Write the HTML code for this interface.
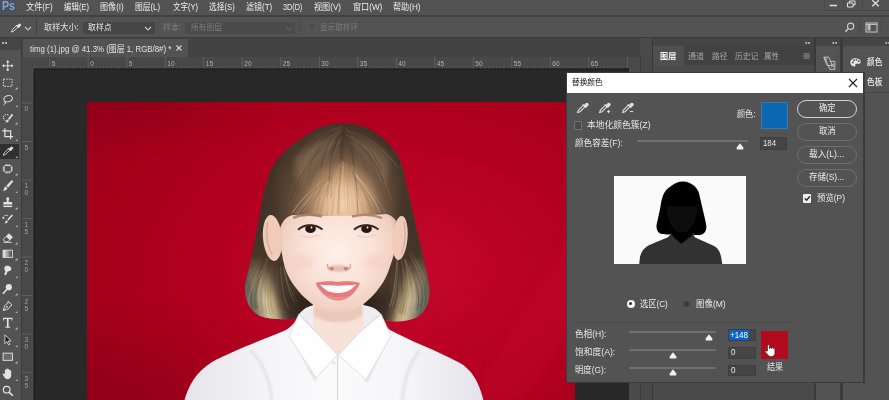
<!DOCTYPE html>
<html lang="zh-CN">
<head>
<meta charset="utf-8">
<title>Photoshop - 替换颜色</title>
<style>
html,body{margin:0;padding:0;}
body{width:889px;height:400px;overflow:hidden;position:relative;background:#535353;
  font-family:"Liberation Sans","Noto Sans CJK SC",sans-serif;font-size:9px;color:#dcdcdc;}
#wrap{position:absolute;left:0;top:0;width:889px;height:400px;overflow:hidden;filter:blur(0.3px);}
.abs{position:absolute;}
.t{position:absolute;white-space:nowrap;line-height:1;transform-origin:0 50%;}

.sep{position:absolute;background:#424242;}
.btn{position:absolute;box-sizing:border-box;border:1px solid #6e6e6e;border-radius:9px;}
.inp{position:absolute;box-sizing:border-box;background:#454545;border:1px solid #3e3e3e;}
.trk{position:absolute;height:2px;background:#707070;border-radius:1px;}

</style>
</head>
<body>
<div id="wrap">

<div class="abs" style="left:0;top:0;width:889px;height:15px;background:#535353"></div>
<div class="abs" style="left:0;top:0;width:15.500px;height:14px;background:#465266;opacity:0.55"></div>
<div class="abs" style="left:0;top:16px;width:889px;height:21px;background:#535353"></div>
<div class="abs" style="left:0;top:15.300px;width:889px;height:1.400px;background:#414141"></div>
<div class="abs" style="left:0;top:37px;width:889px;height:1px;background:#3c3c3c"></div>
<div class="abs" style="left:0;top:38px;width:640px;height:19px;background:#434343"></div><div class="abs" style="left:640px;top:38px;width:13px;height:19px;background:#4a4a4a"></div>
<div class="abs" style="left:23px;top:39px;width:165px;height:18px;background:#535353"></div>
<div class="abs" style="left:34px;top:69px;width:595px;height:331px;background:#282828"></div>
<div class="abs" style="left:629px;top:57px;width:11px;height:343px;background:#4a4a4a"></div>
<div class="abs" style="left:640px;top:57px;width:13px;height:343px;background:#484848;border-left:1px solid #3c3c3c;box-sizing:border-box"></div>
<!-- window controls -->
<div class="sep" style="left:824px;top:0;width:1px;height:10px;background:#484848"></div>
<div class="sep" style="left:843px;top:0;width:1px;height:10px;background:#484848"></div>
<div class="sep" style="left:862px;top:0;width:1px;height:10px;background:#484848"></div>
<div class="sep" style="left:824px;top:10px;width:65px;height:1px;background:#484848"></div>
<svg class="abs" style="left:824px;top:0" width="65" height="10" viewBox="0 0 65 10"><path d="M5.700 5.500h7.300" stroke="#e0e0e0" stroke-width="1.500"/><path d="M23.500 3h5.500v4h-5.500zM25.500 3v-2h5.500v4h-2" stroke="#e0e0e0" stroke-width="1" fill="none"/><path d="M48.300 0.300l6.500 6M54.800 0.300l-6.500 6" stroke="#e6e6e6" stroke-width="1.300"/></svg>
<!-- options bar -->
<svg class="abs" style="left:9.500px;top:22px" width="11.500" height="11.500" viewBox="0 0 16 16"><path d="M2 14l1.2-3.2L9 5l2 2-5.8 5.8z" fill="none" stroke="#e6e6e6" stroke-width="1.2"/><path d="M8.3 4.2l3.5 3.5M10 5.6l2.2-2.4a1.5 1.5 0 0 1 2.2 2.2L12 7.6z" fill="#e6e6e6" stroke="#e6e6e6" stroke-width="1.3"/></svg>
<svg class="abs" style="left:24.2px;top:25.7px" width="8" height="6" viewBox="0 0 8 6"><path d="M1 1l3 3 3-3" stroke="#c8c8c8" stroke-width="1.1" fill="none"/></svg>
<div class="sep" style="left:36px;top:18px;width:1px;height:17px"></div>
<div class="abs" style="left:83px;top:22px;width:72px;height:12px;background:#454545;border-radius:2px"></div>
<svg class="abs" style="left:144px;top:26px" width="8" height="6" viewBox="0 0 8 6"><path d="M1 1l3 3 3-3" stroke="#c8c8c8" stroke-width="1.1" fill="none"/></svg>
<div class="abs" style="left:185px;top:22px;width:110px;height:12px;background:#4b4b4b;border-radius:2px"></div>
<svg class="abs" style="left:285px;top:26px" width="8" height="6" viewBox="0 0 8 6"><path d="M1 1l3 3 3-3" stroke="#606060" stroke-width="1.1" fill="none"/></svg>
<div class="sep" style="left:300px;top:18px;width:1px;height:17px;background:#4a4a4a"></div>
<div class="abs" style="left:308px;top:23px;width:8px;height:8px;background:#4e4e4e;border:1px solid #5a5a5a;box-sizing:border-box"></div>
<svg class="abs" style="left:843px;top:20px" width="14" height="14" viewBox="0 0 14 14"><circle cx="7.6" cy="6.2" r="3.1" stroke="#cdcdcd" stroke-width="1.2" fill="none"/><path d="M5.400 8.500L2.400 11.700" stroke="#cdcdcd" stroke-width="1.500"/></svg><div class="sep" style="left:860px;top:18px;width:1px;height:17px;background:#4a4a4a"></div><div class="sep" style="left:881px;top:18px;width:1px;height:17px;background:#4a4a4a"></div>
<svg class="abs" style="left:865px;top:22px" width="14" height="12" viewBox="0 0 14 12"><rect x="1" y="1" width="11" height="9" stroke="#bdbdbd" stroke-width="1.1" fill="none"/><rect x="2.5" y="3" width="3" height="5.5" fill="#bdbdbd"/><path d="M1 2.5h11" stroke="#bdbdbd"/></svg>
<!-- tab close -->
<svg class="abs" style="left:175px;top:44px" width="8" height="8" viewBox="0 0 8 8"><path d="M1.5 1.5l5 5M6.5 1.5l-5 5" stroke="#d6d6d6" stroke-width="1.1"/></svg>

<svg id="photo" class="abs" style="left:87px;top:102px" width="488" height="298" viewBox="87 102 488 298">
<defs>
<radialGradient id="bgR" gradientUnits="userSpaceOnUse" cx="400" cy="270" r="330" gradientTransform="translate(400 270) scale(1.3 0.9) translate(-400 -270)">
<stop offset="0" stop-color="#c4082c"/><stop offset="0.2" stop-color="#bd0427"/><stop offset="0.45" stop-color="#b20020"/><stop offset="0.7" stop-color="#a6001b"/><stop offset="1" stop-color="#98001a"/>
</radialGradient>
<linearGradient id="hairG" gradientUnits="userSpaceOnUse" x1="0" y1="123" x2="0" y2="320">
<stop offset="0" stop-color="#4a3a2e"/><stop offset="0.12" stop-color="#5e4a3a"/><stop offset="0.3" stop-color="#66513e"/><stop offset="0.5" stop-color="#4c3b2d"/><stop offset="0.72" stop-color="#49392c"/><stop offset="0.88" stop-color="#6a5a46"/><stop offset="1" stop-color="#8a7a58"/>
</linearGradient>
<radialGradient id="bangG" gradientUnits="userSpaceOnUse" cx="343" cy="203" r="52" fx="347" fy="204">
<stop offset="0" stop-color="#f0d3b2"/><stop offset="0.45" stop-color="#dcb892"/><stop offset="0.8" stop-color="#b3916e" stop-opacity="0.9"/><stop offset="1" stop-color="#8a735a" stop-opacity="0"/>
</radialGradient>
<radialGradient id="dkG"><stop offset="0" stop-color="#6a0010" stop-opacity="0.34"/><stop offset="0.5" stop-color="#6a0010" stop-opacity="0.16"/><stop offset="1" stop-color="#6a0010" stop-opacity="0"/></radialGradient>
<radialGradient id="capG" gradientUnits="userSpaceOnUse" cx="339" cy="206" r="88" fx="344" fy="204" gradientTransform="translate(339 206) scale(0.9 1) translate(-339 -206)">
<stop offset="0" stop-color="#f2d2ae"/><stop offset="0.2" stop-color="#e4bd96"/><stop offset="0.36" stop-color="#b48c68"/><stop offset="0.5" stop-color="#785e48"/><stop offset="0.68" stop-color="#584434"/><stop offset="0.88" stop-color="#463629"/><stop offset="1" stop-color="#3a2c22"/>
</radialGradient>
<radialGradient id="faceG" gradientUnits="userSpaceOnUse" cx="338" cy="252" r="72">
<stop offset="0" stop-color="#fef0e9"/><stop offset="0.5" stop-color="#f9e2d7"/><stop offset="0.82" stop-color="#f0cfc0"/><stop offset="1" stop-color="#dfb3a0"/>
</radialGradient>
<linearGradient id="shirtG" gradientUnits="userSpaceOnUse" x1="185" y1="0" x2="485" y2="0">
<stop offset="0" stop-color="#e4e4ea"/><stop offset="0.25" stop-color="#f4f4f7"/><stop offset="0.5" stop-color="#fbfbfc"/><stop offset="0.75" stop-color="#f5f5f8"/><stop offset="1" stop-color="#e2e2e9"/>
</linearGradient>
<linearGradient id="lobeL" gradientUnits="userSpaceOnUse" x1="245" y1="0" x2="300" y2="0" gradientTransform="translate(0 272) skewX(14) translate(0 -272)">
<stop offset="0" stop-color="#6a6f60"/><stop offset="0.1" stop-color="#a1967a"/><stop offset="0.24" stop-color="#d2c098"/><stop offset="0.38" stop-color="#b8a27a"/><stop offset="0.5" stop-color="#645240"/><stop offset="0.62" stop-color="#3e3026"/><stop offset="1" stop-color="#2e221b"/>
</linearGradient>
<linearGradient id="lobeR" gradientUnits="userSpaceOnUse" x1="430" y1="0" x2="375" y2="0" gradientTransform="translate(0 272) skewX(-14) translate(0 -272)">
<stop offset="0" stop-color="#62685c"/><stop offset="0.1" stop-color="#968e78"/><stop offset="0.24" stop-color="#cdbb94"/><stop offset="0.38" stop-color="#b8a27a"/><stop offset="0.5" stop-color="#645240"/><stop offset="0.62" stop-color="#3e3026"/><stop offset="1" stop-color="#2e221b"/>
</linearGradient>
<linearGradient id="lobeFade" gradientUnits="userSpaceOnUse" x1="0" y1="256" x2="0" y2="300">
<stop offset="0" stop-color="#fff" stop-opacity="0"/><stop offset="1" stop-color="#fff" stop-opacity="1"/>
</linearGradient>
<mask id="lobeM" maskUnits="userSpaceOnUse" x="230" y="200" width="220" height="140"><rect x="230" y="200" width="220" height="140" fill="url(#lobeFade)"/></mask>
<filter id="b1" x="-5%" y="-5%" width="110%" height="110%"><feGaussianBlur stdDeviation="0.6"/></filter>
<filter id="b2" x="-30%" y="-30%" width="160%" height="160%"><feGaussianBlur stdDeviation="3"/></filter>
<filter id="b3" x="-30%" y="-30%" width="160%" height="160%"><feGaussianBlur stdDeviation="1.3"/></filter>
<filter id="b5" x="-10%" y="-10%" width="120%" height="120%"><feGaussianBlur stdDeviation="0.5"/></filter>
<filter id="b4" x="-30%" y="-30%" width="160%" height="160%"><feGaussianBlur stdDeviation="6"/></filter>
<clipPath id="pc"><rect x="87" y="102" width="488" height="298"/></clipPath>
<clipPath id="hairC"><path id="hairP" d="M343.700 123.500 C330 123 315 128 303 137.500 C292 145 283 152 277 160 C271 169 268 177 267 182.500 C264 191 262.500 199 261.600 205 C258 228 252 256 246 280 C243 296 248 310 260 316 C270 319.500 284 320 296 318.500 L303 312 L375 312 L382 319.500 C392 322.500 406 322 415 318 C426 313 431 300 429 284 C424 258 416 228 411 205 C410 199 408 191 405.600 182.500 C405 176 403 168 400 160 C396 152 390 144 382 137.500 C370 128 356 123 343.700 123.500 Z"/></clipPath>
</defs>
<g clip-path="url(#pc)">
<rect x="87" y="102" width="488" height="298" fill="url(#bgR)"/>
<path d="M470 400 L575 230 L575 330 L520 400 Z" fill="#d81838" opacity="0.18" filter="url(#b4)"/>

<ellipse cx="120" cy="100" rx="170" ry="60" fill="url(#dkG)" opacity="0.8"/>
<ellipse cx="120" cy="410" rx="170" ry="120" fill="url(#dkG)"/>
<g filter="url(#b1)">
<use href="#hairP" fill="url(#hairG)"/>
<g clip-path="url(#hairC)">
<ellipse cx="264" cy="215" rx="18" ry="62" fill="#46382c" opacity="0.9" filter="url(#b2)"/>
<ellipse cx="412" cy="215" rx="18" ry="62" fill="#46382c" opacity="0.9" filter="url(#b2)"/>
<path d="M300 150 C315 138 330 134 340 136 C330 146 318 160 306 178 Z" fill="#a08a70" opacity="0.45" filter="url(#b2)"/>
<path d="M384 150 C370 138 356 134 348 136 C358 146 370 160 380 178 Z" fill="#a08a70" opacity="0.45" filter="url(#b2)"/>
<g mask="url(#lobeM)"><rect x="236" y="205" width="102" height="125" fill="url(#lobeL)"/><rect x="338" y="205" width="102" height="125" fill="url(#lobeR)"/></g>
</g>
<g clip-path="url(#hairC)"><path d="M267.9 263.7 Q257.5 297.1 263.5 310.5" stroke="#3a2e24" stroke-width="0.77" opacity="0.24" fill="none"/><path d="M391.3 259.5 Q388.5 291.7 382.5 303.8" stroke="#3a2e24" stroke-width="1.00" opacity="0.29" fill="none"/><path d="M263.7 263.3 Q247.3 296.5 253.3 309.6" stroke="#3a2e24" stroke-width="1.11" opacity="0.13" fill="none"/><path d="M406.7 259.5 Q422.9 294.8 416.9 310.1" stroke="#3a2e24" stroke-width="0.92" opacity="0.28" fill="none"/><path d="M266.4 263.5 Q250.2 296.0 256.2 308.6" stroke="#3a2e24" stroke-width="1.20" opacity="0.23" fill="none"/><path d="M399.5 266.0 Q403.0 298.6 397.0 311.1" stroke="#6a5a46" stroke-width="0.95" opacity="0.17" fill="none"/><path d="M267.2 253.5 Q250.2 290.9 256.2 308.3" stroke="#6a5a46" stroke-width="1.31" opacity="0.27" fill="none"/><path d="M405.1 259.5 Q419.6 296.0 413.6 312.5" stroke="#d8c8a0" stroke-width="1.35" opacity="0.20" fill="none"/><path d="M282.0 262.0 Q290.1 293.5 296.1 304.9" stroke="#40342a" stroke-width="0.94" opacity="0.19" fill="none"/><path d="M400.3 253.7 Q409.2 293.4 403.2 313.1" stroke="#5a4a3a" stroke-width="0.74" opacity="0.26" fill="none"/><path d="M278.5 266.8 Q274.0 298.3 280.0 309.8" stroke="#6a5a46" stroke-width="1.32" opacity="0.19" fill="none"/><path d="M392.7 260.9 Q387.0 292.0 381.0 303.1" stroke="#40342a" stroke-width="0.79" opacity="0.17" fill="none"/><path d="M272.3 253.5 Q260.9 293.5 266.9 313.5" stroke="#3a2e24" stroke-width="0.89" opacity="0.15" fill="none"/><path d="M404.4 269.8 Q412.5 302.5 406.5 315.3" stroke="#6a5a46" stroke-width="1.37" opacity="0.15" fill="none"/><path d="M264.9 256.2 Q250.0 292.6 256.0 308.9" stroke="#3a2e24" stroke-width="0.83" opacity="0.18" fill="none"/><path d="M410.2 257.7 Q426.7 292.3 420.7 306.8" stroke="#3a2e24" stroke-width="1.37" opacity="0.25" fill="none"/><path d="M278.5 267.7 Q278.7 299.1 284.7 310.4" stroke="#3a2e24" stroke-width="0.97" opacity="0.20" fill="none"/><path d="M409.0 253.2 Q428.8 289.7 422.8 306.2" stroke="#d8c8a0" stroke-width="0.78" opacity="0.24" fill="none"/><path d="M264.6 261.7 Q246.2 295.4 252.2 309.1" stroke="#3a2e24" stroke-width="0.72" opacity="0.29" fill="none"/><path d="M398.5 258.3 Q403.3 294.6 397.3 310.8" stroke="#5a4a3a" stroke-width="0.78" opacity="0.22" fill="none"/><path d="M283.9 257.6 Q290.9 289.8 296.9 302.0" stroke="#40342a" stroke-width="1.22" opacity="0.22" fill="none"/><path d="M396.6 269.1 Q399.4 299.1 393.4 309.1" stroke="#3a2e24" stroke-width="1.34" opacity="0.27" fill="none"/><path d="M269.3 253.6 Q256.2 293.3 262.2 313.0" stroke="#3a2e24" stroke-width="0.96" opacity="0.15" fill="none"/><path d="M397.1 257.9 Q395.4 292.4 389.4 306.8" stroke="#d8c8a0" stroke-width="1.26" opacity="0.28" fill="none"/><path d="M277.6 261.3 Q278.7 294.7 284.7 308.0" stroke="#5a4a3a" stroke-width="1.39" opacity="0.28" fill="none"/><path d="M403.0 258.2 Q410.4 297.0 404.4 315.7" stroke="#40342a" stroke-width="1.37" opacity="0.19" fill="none"/><path d="M265.9 255.5 Q252.2 292.2 258.2 308.8" stroke="#3a2e24" stroke-width="1.39" opacity="0.24" fill="none"/><path d="M412.3 263.6 Q433.9 295.0 427.9 306.5" stroke="#5a4a3a" stroke-width="1.34" opacity="0.28" fill="none"/><path d="M278.8 255.2 Q279.3 292.4 285.3 309.6" stroke="#40342a" stroke-width="0.76" opacity="0.31" fill="none"/><path d="M398.1 253.5 Q397.9 290.6 391.9 307.7" stroke="#d8c8a0" stroke-width="0.72" opacity="0.24" fill="none"/><path d="M273.1 263.0 Q264.7 299.0 270.7 315.0" stroke="#6a5a46" stroke-width="1.16" opacity="0.19" fill="none"/><path d="M399.0 269.5 Q406.6 301.5 400.6 313.4" stroke="#3a2e24" stroke-width="1.22" opacity="0.15" fill="none"/><path d="M283.0 267.7 Q291.3 294.5 297.3 301.3" stroke="#d8c8a0" stroke-width="0.91" opacity="0.17" fill="none"/><path d="M399.8 254.4 Q404.7 294.0 398.7 313.6" stroke="#40342a" stroke-width="1.33" opacity="0.25" fill="none"/><path d="M280.4 266.9 Q282.6 297.7 288.6 308.5" stroke="#d8c8a0" stroke-width="1.07" opacity="0.22" fill="none"/><path d="M411.3 252.1 Q433.1 289.4 427.1 306.7" stroke="#d8c8a0" stroke-width="0.80" opacity="0.24" fill="none"/><path d="M263.0 264.3 Q247.1 296.1 253.1 307.9" stroke="#6a5a46" stroke-width="1.25" opacity="0.14" fill="none"/><path d="M399.8 265.9 Q406.0 299.3 400.0 312.6" stroke="#3a2e24" stroke-width="0.72" opacity="0.30" fill="none"/><path d="M262.7 269.5 Q244.2 298.2 250.2 306.9" stroke="#d8c8a0" stroke-width="1.18" opacity="0.21" fill="none"/><path d="M403.0 264.6 Q407.3 299.6 401.3 314.7" stroke="#40342a" stroke-width="1.35" opacity="0.30" fill="none"/><path d="M266.3 259.5 Q251.3 294.3 257.3 309.1" stroke="#40342a" stroke-width="0.75" opacity="0.17" fill="none"/><path d="M412.5 268.1 Q430.3 296.7 424.3 305.3" stroke="#40342a" stroke-width="0.80" opacity="0.30" fill="none"/><path d="M282.6 269.1 Q290.3 296.2 296.3 303.2" stroke="#6a5a46" stroke-width="0.81" opacity="0.25" fill="none"/><path d="M410.1 259.3 Q422.8 294.5 416.8 309.7" stroke="#40342a" stroke-width="0.92" opacity="0.26" fill="none"/><path d="M262.7 259.9 Q242.0 291.8 248.0 303.6" stroke="#40342a" stroke-width="1.06" opacity="0.18" fill="none"/><path d="M393.5 256.1 Q386.0 290.7 380.0 305.3" stroke="#5a4a3a" stroke-width="0.89" opacity="0.13" fill="none"/><path d="M278.6 254.3 Q280.7 290.9 286.7 307.5" stroke="#40342a" stroke-width="0.98" opacity="0.23" fill="none"/><path d="M401.0 257.0 Q408.3 295.9 402.3 314.8" stroke="#d8c8a0" stroke-width="1.00" opacity="0.13" fill="none"/><path d="M283.7 266.4 Q288.9 294.5 294.9 302.6" stroke="#d8c8a0" stroke-width="0.75" opacity="0.29" fill="none"/><path d="M403.2 268.7 Q411.3 301.3 405.3 314.0" stroke="#d8c8a0" stroke-width="0.73" opacity="0.26" fill="none"/><path d="M285.0 256.7 Q288.8 289.8 294.8 303.0" stroke="#40342a" stroke-width="1.14" opacity="0.23" fill="none"/><path d="M409.2 256.9 Q423.7 293.9 417.7 310.8" stroke="#40342a" stroke-width="0.73" opacity="0.12" fill="none"/><path d="M275.3 261.3 Q266.8 297.0 272.8 312.8" stroke="#6a5a46" stroke-width="0.77" opacity="0.28" fill="none"/><path d="M404.8 259.1 Q412.4 296.9 406.4 314.6" stroke="#d8c8a0" stroke-width="1.39" opacity="0.19" fill="none"/><path d="M281.6 263.4 Q283.4 294.8 289.4 306.2" stroke="#40342a" stroke-width="1.39" opacity="0.29" fill="none"/><path d="M414.2 259.8 Q433.3 291.7 427.3 303.6" stroke="#6a5a46" stroke-width="1.31" opacity="0.25" fill="none"/><path d="M267.3 257.3 Q255.4 294.2 261.4 311.1" stroke="#d8c8a0" stroke-width="0.89" opacity="0.12" fill="none"/><path d="M406.9 257.8 Q415.8 294.5 409.8 311.2" stroke="#40342a" stroke-width="0.85" opacity="0.16" fill="none"/><path d="M267.9 257.0 Q258.1 295.1 264.1 313.1" stroke="#d8c8a0" stroke-width="1.05" opacity="0.12" fill="none"/><path d="M406.8 252.8 Q420.8 290.9 414.8 309.0" stroke="#40342a" stroke-width="1.14" opacity="0.14" fill="none"/></g>
<path d="M299 314 C303 309 308 306 314 305 L316 332 Z M381 314 C377 309 372 306 362 305 L360 332 Z" fill="#eeeef2"/>
<path d="M313 285 L313 333 L337 359 L364 333 L363 285 Z" fill="#f8e2d8"/>
<path d="M314 316 C324 324 352 324 362 316 L362 306 L314 306 Z" fill="#e8c4b6" opacity="0.85" filter="url(#b3)"/>
<path d="M280 200 C278 228 280 250 285 268 C291 287 310 305 324 311 C333 314.500 343 314.500 352 311 C366 305 384 287 389.500 268 C396 250 401 228 400 200 C394 176 287 176 280 200 Z" fill="url(#faceG)"/>
<ellipse cx="302" cy="262" rx="12" ry="8" fill="#f7c9c0" opacity="0.55" filter="url(#b2)"/>
<ellipse cx="376" cy="262" rx="12" ry="8" fill="#f7c9c0" opacity="0.55" filter="url(#b2)"/>
<path d="M343.700 123.500 C330 123 315 128 303 137.500 C292 145 283 152 277 160 C271 169 268 177 267 182.500 C264 191 262.500 199 261.600 205 C260 214 259 224 257 234 L280 228 C283 220 288 215 294 215 C320 217 362 216 386 214 C392 215 397 220 400 228 L416 234 C414 224 412.500 214 411 205 C410 199 408 191 405.600 182.500 C405 176 403 168 400 160 C396 152 390 144 382 137.500 C370 128 356 123 343.700 123.500 Z" fill="url(#capG)"/>
<g clip-path="url(#hairC)">
<path d="M296 158 C310 144 326 138 338 138 C326 150 312 166 300 186 C296 180 294 168 296 158 Z" fill="#a88c6c" opacity="0.4" filter="url(#b2)"/>
<path d="M388 158 C376 144 360 138 348 138 C360 150 374 166 384 186 C388 180 390 168 388 158 Z" fill="#a88c6c" opacity="0.4" filter="url(#b2)"/>
<ellipse cx="264" cy="216" rx="12" ry="36" fill="#43342a" opacity="0.9" filter="url(#b2)"/>
<ellipse cx="411" cy="216" rx="12" ry="36" fill="#43342a" opacity="0.9" filter="url(#b2)"/>
</g>
<ellipse cx="272.500" cy="238" rx="9.500" ry="23" fill="#f0cbba" transform="rotate(-5 272.500 238)"/>
<path d="M268 222 C265 232 267 246 272 254" stroke="#d9a896" stroke-width="1.600" fill="none" opacity="0.8"/>
<ellipse cx="400" cy="238" rx="7.500" ry="22" fill="#f0cbba" transform="rotate(5 400 238)"/>
<path d="M404 222 C406.500 232 405 246 401 254" stroke="#d9a896" stroke-width="1.500" fill="none" opacity="0.8"/>
<g filter="url(#b5)" opacity="0.7"><path d="M326.8 177.8 Q302.5 195.9 290.7 214.3" stroke="#8a6e54" stroke-width="1.31" opacity="0.49" fill="none"/><path d="M325.3 178.5 Q302.8 196.3 292.5 212.6" stroke="#eac8a0" stroke-width="1.37" opacity="0.44" fill="none"/><path d="M326.9 182.2 Q305.2 198.1 294.9 214.1" stroke="#eac8a0" stroke-width="1.10" opacity="0.29" fill="none"/><path d="M328.7 182.4 Q307.3 198.2 297.0 214.6" stroke="#eac8a0" stroke-width="1.46" opacity="0.49" fill="none"/><path d="M325.1 173.9 Q306.6 193.9 298.8 212.8" stroke="#8a6e54" stroke-width="1.37" opacity="0.36" fill="none"/><path d="M329.0 179.0 Q309.9 196.5 300.8 213.3" stroke="#8a6e54" stroke-width="1.07" opacity="0.32" fill="none"/><path d="M331.3 181.3 Q311.9 197.6 302.2 212.7" stroke="#b8946e" stroke-width="1.29" opacity="0.45" fill="none"/><path d="M327.0 174.1 Q311.2 194.0 304.7 213.2" stroke="#8a6e54" stroke-width="1.22" opacity="0.48" fill="none"/><path d="M332.5 171.3 Q315.5 192.7 307.1 212.6" stroke="#8a6e54" stroke-width="1.21" opacity="0.34" fill="none"/><path d="M331.7 173.3 Q316.2 193.6 308.9 213.4" stroke="#8a6e54" stroke-width="1.15" opacity="0.47" fill="none"/><path d="M329.1 172.0 Q316.0 193.0 310.7 213.2" stroke="#8a6e54" stroke-width="1.09" opacity="0.28" fill="none"/><path d="M331.6 172.8 Q319.3 193.4 314.0 214.1" stroke="#b8946e" stroke-width="0.95" opacity="0.55" fill="none"/><path d="M333.1 170.6 Q320.8 192.3 315.1 215.4" stroke="#b8946e" stroke-width="1.06" opacity="0.50" fill="none"/><path d="M332.4 176.4 Q321.9 195.2 317.6 212.8" stroke="#c8a27a" stroke-width="1.30" opacity="0.27" fill="none"/><path d="M334.0 172.2 Q324.1 193.1 319.7 215.2" stroke="#8a6e54" stroke-width="1.26" opacity="0.40" fill="none"/><path d="M338.0 170.3 Q327.4 192.1 321.8 215.3" stroke="#b8946e" stroke-width="1.25" opacity="0.30" fill="none"/><path d="M337.8 168.7 Q328.8 191.4 324.2 215.0" stroke="#f6dcbc" stroke-width="0.70" opacity="0.34" fill="none"/><path d="M339.4 164.8 Q331.3 189.4 327.0 215.2" stroke="#c8a27a" stroke-width="0.93" opacity="0.46" fill="none"/><path d="M337.3 173.1 Q331.1 193.5 328.5 215.3" stroke="#eac8a0" stroke-width="1.30" opacity="0.27" fill="none"/><path d="M337.6 162.6 Q333.1 188.3 331.4 215.3" stroke="#8a6e54" stroke-width="0.90" opacity="0.34" fill="none"/><path d="M339.4 163.5 Q334.8 188.8 332.6 213.8" stroke="#a08060" stroke-width="0.72" opacity="0.49" fill="none"/><path d="M339.8 169.4 Q336.8 191.7 335.6 214.7" stroke="#eac8a0" stroke-width="0.74" opacity="0.41" fill="none"/><path d="M340.8 167.4 Q338.6 190.7 337.7 214.0" stroke="#8a6e54" stroke-width="1.43" opacity="0.51" fill="none"/><path d="M339.8 163.4 Q339.3 188.7 339.5 214.7" stroke="#a08060" stroke-width="1.48" opacity="0.34" fill="none"/><path d="M343.3 161.6 Q342.0 187.8 341.2 212.9" stroke="#eac8a0" stroke-width="1.21" opacity="0.45" fill="none"/><path d="M343.0 166.1 Q343.1 190.1 343.1 215.2" stroke="#eac8a0" stroke-width="1.50" opacity="0.32" fill="none"/><path d="M341.8 160.9 Q344.2 187.5 345.8 214.2" stroke="#b8946e" stroke-width="0.96" opacity="0.30" fill="none"/><path d="M346.5 161.7 Q347.8 187.9 347.8 213.7" stroke="#b8946e" stroke-width="1.03" opacity="0.47" fill="none"/><path d="M344.8 163.9 Q348.4 189.0 350.2 214.2" stroke="#b8946e" stroke-width="0.99" opacity="0.40" fill="none"/><path d="M346.6 169.3 Q350.8 191.6 352.6 215.2" stroke="#c8a27a" stroke-width="1.01" opacity="0.28" fill="none"/><path d="M346.7 165.2 Q352.1 189.6 354.7 213.8" stroke="#b8946e" stroke-width="1.31" opacity="0.29" fill="none"/><path d="M350.8 167.8 Q355.6 190.9 357.1 215.3" stroke="#b8946e" stroke-width="1.36" opacity="0.37" fill="none"/><path d="M351.6 166.2 Q357.4 190.1 359.4 213.0" stroke="#b8946e" stroke-width="1.48" opacity="0.32" fill="none"/><path d="M351.0 171.1 Q357.7 192.5 360.3 214.8" stroke="#f6dcbc" stroke-width="0.70" opacity="0.28" fill="none"/><path d="M350.2 165.2 Q358.7 189.6 362.5 212.9" stroke="#8a6e54" stroke-width="0.90" opacity="0.34" fill="none"/><path d="M352.1 167.0 Q361.5 190.5 365.5 215.3" stroke="#b8946e" stroke-width="0.85" opacity="0.34" fill="none"/><path d="M353.1 166.4 Q363.0 190.2 367.0 213.9" stroke="#eac8a0" stroke-width="1.47" opacity="0.34" fill="none"/><path d="M354.7 172.1 Q365.4 193.1 369.8 212.6" stroke="#c8a27a" stroke-width="1.03" opacity="0.41" fill="none"/><path d="M350.5 170.1 Q364.7 192.0 371.9 212.7" stroke="#8a6e54" stroke-width="0.88" opacity="0.44" fill="none"/><path d="M353.0 173.7 Q367.0 193.8 373.7 213.8" stroke="#8a6e54" stroke-width="1.25" opacity="0.35" fill="none"/><path d="M356.2 176.8 Q369.7 195.4 375.5 214.0" stroke="#eac8a0" stroke-width="0.86" opacity="0.27" fill="none"/><path d="M353.6 175.1 Q370.4 194.6 378.6 213.4" stroke="#a08060" stroke-width="1.46" opacity="0.48" fill="none"/><path d="M354.2 173.3 Q371.7 193.6 380.3 212.7" stroke="#f6dcbc" stroke-width="1.18" opacity="0.52" fill="none"/><path d="M354.4 172.3 Q373.6 193.1 383.1 212.7" stroke="#eac8a0" stroke-width="0.75" opacity="0.29" fill="none"/><path d="M359.9 181.3 Q377.1 197.7 384.4 212.7" stroke="#8a6e54" stroke-width="0.83" opacity="0.28" fill="none"/><path d="M359.1 178.4 Q377.8 196.2 386.3 214.5" stroke="#f6dcbc" stroke-width="1.00" opacity="0.26" fill="none"/></g>
<g clip-path="url(#hairC)" filter="url(#b5)" opacity="0.5"><path d="M342.5 126.0 Q324.4 136.3 316.8 174.9" stroke="#8a7560" stroke-width="0.88" opacity="0.38" fill="none"/><path d="M345.3 130.6 Q377.8 136.8 397.1 167.3" stroke="#8a7560" stroke-width="1.62" opacity="0.38" fill="none"/><path d="M341.9 137.0 Q331.9 150.2 330.9 198.1" stroke="#5b4a3a" stroke-width="1.12" opacity="0.47" fill="none"/><path d="M343.7 133.5 Q368.4 145.3 381.3 191.0" stroke="#3f3228" stroke-width="0.84" opacity="0.26" fill="none"/><path d="M342.2 135.0 Q329.7 152.5 326.6 216.0" stroke="#94806a" stroke-width="1.14" opacity="0.33" fill="none"/><path d="M343.8 134.6 Q378.4 140.0 399.5 168.8" stroke="#8a7560" stroke-width="1.72" opacity="0.34" fill="none"/><path d="M340.6 137.4 Q310.4 146.0 293.0 183.1" stroke="#4e3f32" stroke-width="0.82" opacity="0.32" fill="none"/><path d="M345.9 130.6 Q375.0 145.0 391.5 200.5" stroke="#8a7560" stroke-width="1.71" opacity="0.49" fill="none"/><path d="M343.0 137.2 Q330.2 150.3 327.0 198.1" stroke="#8a7560" stroke-width="1.62" opacity="0.48" fill="none"/><path d="M344.0 130.3 Q367.3 138.6 379.1 172.0" stroke="#94806a" stroke-width="0.88" opacity="0.31" fill="none"/><path d="M342.8 126.4 Q318.3 132.7 305.6 160.2" stroke="#94806a" stroke-width="1.34" opacity="0.30" fill="none"/><path d="M343.2 133.5 Q359.7 141.5 366.0 172.0" stroke="#5b4a3a" stroke-width="0.90" opacity="0.40" fill="none"/><path d="M342.3 131.0 Q315.0 138.9 299.9 172.6" stroke="#94806a" stroke-width="1.69" opacity="0.32" fill="none"/><path d="M345.3 135.4 Q373.8 147.5 389.9 195.6" stroke="#8a7560" stroke-width="1.09" opacity="0.42" fill="none"/><path d="M342.4 129.0 Q319.5 142.6 308.1 194.3" stroke="#5b4a3a" stroke-width="1.04" opacity="0.33" fill="none"/><path d="M343.2 129.0 Q368.5 133.4 382.0 155.3" stroke="#5b4a3a" stroke-width="1.31" opacity="0.32" fill="none"/><path d="M340.0 127.2 Q307.0 135.0 287.3 170.4" stroke="#3f3228" stroke-width="1.68" opacity="0.32" fill="none"/><path d="M345.6 128.8 Q366.1 138.8 375.6 177.3" stroke="#4e3f32" stroke-width="0.99" opacity="0.54" fill="none"/><path d="M341.9 136.4 Q309.6 149.1 290.5 200.1" stroke="#3f3228" stroke-width="1.40" opacity="0.48" fill="none"/><path d="M344.9 134.5 Q363.9 140.1 372.1 163.5" stroke="#8a7560" stroke-width="1.02" opacity="0.36" fill="none"/><path d="M342.2 133.2 Q331.1 143.5 329.3 181.0" stroke="#3a2c22" stroke-width="1.71" opacity="0.49" fill="none"/><path d="M344.1 133.5 Q372.6 139.8 388.7 169.3" stroke="#4e3f32" stroke-width="1.00" opacity="0.49" fill="none"/><path d="M342.7 130.7 Q324.6 137.6 317.0 164.8" stroke="#94806a" stroke-width="0.95" opacity="0.41" fill="none"/><path d="M343.8 137.9 Q369.2 146.1 382.7 180.2" stroke="#3a2c22" stroke-width="1.11" opacity="0.54" fill="none"/><path d="M341.9 131.0 Q322.9 143.7 314.6 191.1" stroke="#8a7560" stroke-width="1.44" opacity="0.37" fill="none"/><path d="M344.3 127.9 Q370.7 142.9 385.1 200.2" stroke="#4e3f32" stroke-width="1.62" opacity="0.37" fill="none"/><path d="M342.5 126.2 Q312.0 132.0 294.4 160.4" stroke="#94806a" stroke-width="0.94" opacity="0.49" fill="none"/><path d="M345.8 134.8 Q367.4 146.9 377.8 192.7" stroke="#5b4a3a" stroke-width="0.95" opacity="0.33" fill="none"/><path d="M342.7 131.9 Q312.5 145.4 295.0 198.5" stroke="#5b4a3a" stroke-width="1.10" opacity="0.50" fill="none"/><path d="M343.9 133.3 Q355.7 150.8 358.0 214.3" stroke="#3a2c22" stroke-width="1.19" opacity="0.52" fill="none"/><path d="M342.5 135.4 Q310.9 146.9 292.2 193.6" stroke="#5b4a3a" stroke-width="1.42" opacity="0.43" fill="none"/><path d="M344.7 126.5 Q359.3 139.1 364.0 185.3" stroke="#94806a" stroke-width="0.96" opacity="0.36" fill="none"/><path d="M340.6 128.3 Q324.0 145.9 317.7 210.0" stroke="#94806a" stroke-width="1.64" opacity="0.45" fill="none"/><path d="M344.2 131.5 Q368.6 139.1 381.3 170.8" stroke="#3a2c22" stroke-width="1.58" opacity="0.44" fill="none"/><path d="M341.8 130.4 Q326.2 140.3 320.7 177.4" stroke="#94806a" stroke-width="1.24" opacity="0.26" fill="none"/><path d="M343.7 135.2 Q369.9 144.4 384.0 181.9" stroke="#3f3228" stroke-width="1.64" opacity="0.49" fill="none"/><path d="M341.9 130.4 Q326.4 138.2 320.9 168.0" stroke="#3f3228" stroke-width="1.30" opacity="0.45" fill="none"/><path d="M345.8 129.8 Q354.0 139.6 353.5 175.3" stroke="#3a2c22" stroke-width="1.31" opacity="0.27" fill="none"/><path d="M340.1 127.6 Q318.3 137.2 307.7 174.5" stroke="#4e3f32" stroke-width="1.80" opacity="0.47" fill="none"/><path d="M345.9 131.9 Q370.3 137.3 383.0 161.8" stroke="#5b4a3a" stroke-width="1.49" opacity="0.47" fill="none"/></g>
<path d="M344 124 C343 134 342 146 341 160" stroke="#3e3026" stroke-width="2.200" fill="none" opacity="0.7" filter="url(#b3)"/>
<path d="M293 218 C301 214.500 312 214 322 216.500" stroke="#a47e60" stroke-width="2.400" fill="none" opacity="0.85"/>
<path d="M352 216.500 C362 214 373 214.500 382 218" stroke="#a47e60" stroke-width="2.400" fill="none" opacity="0.85"/>
<path d="M299 229.500 C304 225 315 224.500 321.5 229.300 C316 232.500 305 233 299 229.500 Z" fill="#efe3de"/>
<ellipse cx="310.5" cy="228.700" rx="5.300" ry="4.300" fill="#2a1914"/>
<path d="M298 229.800 C304 224 315 223.600 322.5 229.500" stroke="#3a261e" stroke-width="1.900" fill="none"/>
<circle cx="311.5" cy="227.500" r="0.900" fill="#fff"/>
<path d="M301 235.500 C307 237.500 314 237.500 320 235" stroke="#ecccbf" stroke-width="1.400" fill="none" opacity="0.7"/>
<path d="M355 229.500 C360 225 371 224.500 377.5 229.300 C372 232.500 361 233 355 229.500 Z" fill="#efe3de"/>
<ellipse cx="366.5" cy="228.700" rx="5.300" ry="4.300" fill="#2a1914"/>
<path d="M354 229.800 C360 224 371 223.600 378.5 229.500" stroke="#3a261e" stroke-width="1.900" fill="none"/>
<circle cx="367.5" cy="227.500" r="0.900" fill="#fff"/>
<path d="M357 235.500 C363 237.500 370 237.500 376 235" stroke="#ecccbf" stroke-width="1.400" fill="none" opacity="0.7"/>
<path d="M338 232 L338 262" stroke="#ffffff" stroke-width="5" opacity="0.55" filter="url(#b3)"/>
<ellipse cx="338.500" cy="268.500" rx="11" ry="3.500" fill="#dfae9e" opacity="0.7" filter="url(#b3)"/>
<ellipse cx="331.500" cy="268.500" rx="2.600" ry="1.500" fill="#b97c6c" opacity="0.9"/><ellipse cx="346" cy="268.500" rx="2.600" ry="1.500" fill="#b97c6c" opacity="0.9"/>
<path d="M327.500 264 C327 267 329 270.500 333 270.500 M350.500 264 C351 267 349 270.500 345 270.500" stroke="#d9a898" stroke-width="1.300" fill="none"/>
<path d="M315.500 283 C322 281 332 280.500 338 282 C344 280.500 354 281 360 283 C355 295 346 300.500 338 300.500 C330 300.500 321 295 315.500 283 Z" fill="#e67a7e"/>
<path d="M320 284.500 C330 286 347 286 356 284.500 C351 291 345 293 338 293 C331 293 325 291 320 284.500 Z" fill="#fffaf8"/>
<path d="M324 294 C332 299 344 299 352 294 C346 301 330 301 324 294 Z" fill="#f09496"/>
<path d="M299 314 C296 322 292 326 286 330 C262 340 230 352 212 362 C196 372 188 386 184 402 L484 402 C480 386 474 370 458 362 C440 352 408 340 390 330 C385 326 382 320 381 314 L368 332 L338 356 L308 332 Z" fill="url(#shirtG)"/>
<path d="M250 350 C262 360 270 380 272 402 M420 350 C410 362 404 380 402 402" stroke="#d4d4dc" stroke-width="3" fill="none" opacity="0.55" filter="url(#b3)"/>
<path d="M292 332 C300 350 310 370 316 380 M388 332 C380 350 372 370 366 382" stroke="#c9c9d2" stroke-width="2.500" fill="none" opacity="0.6" filter="url(#b3)"/>
<path d="M299 314 L315 331 L337.500 355 L316 378 L289 336 Z" fill="#fefefe" stroke="#d6d6de" stroke-width="0.800"/>
<path d="M381 314 L361 331 L338.500 355 L366 380 L391 336 Z" fill="#fefefe" stroke="#d6d6de" stroke-width="0.800"/>
<path d="M337.500 356 L337.500 402" stroke="#d8d8e0" stroke-width="1.200"/>
<circle cx="334" cy="363" r="1.700" fill="#e0e0e8"/>
</g></g></svg>
<svg class="abs" style="left:22px;top:57px" width="607" height="343" viewBox="22 57 607 343">
<rect x="22" y="57" width="607" height="12" fill="#484848"/><rect x="22" y="57" width="12" height="343" fill="#484848"/>
<path d="M34 69H629M34.200 69V400" stroke="#1e1e1e" stroke-width="1.400"/>
<path d="M34.4 66.500V68.300M38.2 67.300V68.300M42.1 66.500V68.300M45.9 67.300V68.300M49.8 57V68.300M53.6 67.300V68.300M57.5 66.500V68.300M61.4 67.300V68.300M65.2 66.500V68.300M69.0 67.300V68.300M72.9 66.500V68.300M76.7 67.300V68.300M80.6 66.500V68.300M84.4 67.300V68.300M88.3 57V68.300M92.1 67.300V68.300M96.0 66.500V68.300M99.8 67.300V68.300M103.7 66.500V68.300M107.5 67.300V68.300M111.4 66.500V68.300M115.2 67.300V68.300M119.1 66.500V68.300M122.9 67.300V68.300M126.8 57V68.300M130.7 67.300V68.300M134.5 66.500V68.300M138.3 67.300V68.300M142.2 66.500V68.300M146.0 67.300V68.300M149.9 66.500V68.300M153.8 67.300V68.300M157.6 66.500V68.300M161.4 67.300V68.300M165.3 57V68.300M169.2 67.300V68.300M173.0 66.500V68.300M176.8 67.300V68.300M180.7 66.500V68.300M184.5 67.300V68.300M188.4 66.500V68.300M192.2 67.300V68.300M196.1 66.500V68.300M199.9 67.300V68.300M203.8 57V68.300M207.7 67.300V68.300M211.5 66.500V68.300M215.3 67.300V68.300M219.2 66.500V68.300M223.0 67.300V68.300M226.9 66.500V68.300M230.7 67.300V68.300M234.6 66.500V68.300M238.5 67.300V68.300M242.3 57V68.300M246.2 67.300V68.300M250.0 66.500V68.300M253.8 67.300V68.300M257.7 66.500V68.300M261.6 67.300V68.300M265.4 66.500V68.300M269.2 67.300V68.300M273.1 66.500V68.300M277.0 67.300V68.300M280.8 57V68.300M284.7 67.300V68.300M288.5 66.500V68.300M292.4 67.300V68.300M296.2 66.500V68.300M300.1 67.300V68.300M303.9 66.500V68.300M307.8 67.300V68.300M311.6 66.500V68.300M315.5 67.300V68.300M319.3 57V68.300M323.2 67.300V68.300M327.0 66.500V68.300M330.9 67.300V68.300M334.7 66.500V68.300M338.6 67.300V68.300M342.4 66.500V68.300M346.2 67.300V68.300M350.1 66.500V68.300M354.0 67.300V68.300M357.8 57V68.300M361.7 67.300V68.300M365.5 66.500V68.300M369.4 67.300V68.300M373.2 66.500V68.300M377.1 67.300V68.300M380.9 66.500V68.300M384.8 67.300V68.300M388.6 66.500V68.300M392.5 67.300V68.300M396.3 57V68.300M400.2 67.300V68.300M404.0 66.500V68.300M407.9 67.300V68.300M411.7 66.500V68.300M415.6 67.300V68.300M419.4 66.500V68.300M423.3 67.300V68.300M427.1 66.500V68.300M431.0 67.300V68.300M434.8 57V68.300M438.7 67.300V68.300M442.5 66.500V68.300M446.4 67.300V68.300M450.2 66.500V68.300M454.1 67.300V68.300M457.9 66.500V68.300M461.8 67.300V68.300M465.6 66.500V68.300M469.5 67.300V68.300M473.3 57V68.300M477.2 67.300V68.300M481.0 66.500V68.300M484.9 67.300V68.300M488.7 66.500V68.300M492.6 67.300V68.300M496.4 66.500V68.300M500.3 67.300V68.300M504.1 66.500V68.300M508.0 67.300V68.300M511.8 57V68.300M515.6 67.300V68.300M519.5 66.500V68.300M523.4 67.300V68.300M527.2 66.500V68.300M531.1 67.300V68.300M534.9 66.500V68.300M538.8 67.300V68.300M542.6 66.500V68.300M546.5 67.300V68.300M550.3 57V68.300M554.1 67.300V68.300M558.0 66.500V68.300M561.9 67.300V68.300M565.7 66.500V68.300M569.6 67.300V68.300M573.4 66.500V68.300M577.2 67.300V68.300M581.1 66.500V68.300M585.0 67.300V68.300M588.8 57V68.300M592.6 67.300V68.300M596.5 66.500V68.300M600.4 67.300V68.300M604.2 66.500V68.300M608.0 67.300V68.300M611.9 66.500V68.300M615.8 67.300V68.300M619.6 66.500V68.300M623.5 67.300V68.300M627.3 57V68.300M631.1 67.300V68.300" stroke="#656565" stroke-width="0.8"/>
<path d="M31.500 72.2H33M32.200 76.0H33M31.500 79.9H33M32.200 83.8H33M31.500 87.6H33M32.200 91.4H33M31.500 95.3H33M32.200 99.1H33M22 103.0H33M32.200 106.8H33M31.500 110.7H33M32.200 114.5H33M31.500 118.4H33M32.200 122.2H33M31.500 126.1H33M32.200 129.9H33M31.500 133.8H33M32.200 137.7H33M22 141.5H33M32.200 145.3H33M31.500 149.2H33M32.200 153.0H33M31.500 156.9H33M32.200 160.8H33M31.500 164.6H33M32.200 168.4H33M31.500 172.3H33M32.200 176.2H33M22 180.0H33M32.200 183.8H33M31.500 187.7H33M32.200 191.5H33M31.500 195.4H33M32.200 199.2H33M31.500 203.1H33M32.200 207.0H33M31.500 210.8H33M32.200 214.7H33M22 218.5H33M32.200 222.3H33M31.500 226.2H33M32.200 230.0H33M31.500 233.9H33M32.200 237.8H33M31.500 241.6H33M32.200 245.4H33M31.500 249.3H33M32.200 253.2H33M22 257.0H33M32.200 260.9H33M31.500 264.7H33M32.200 268.6H33M31.500 272.4H33M32.200 276.2H33M31.500 280.1H33M32.200 284.0H33M31.500 287.8H33M32.200 291.7H33M22 295.5H33M32.200 299.4H33M31.500 303.2H33M32.200 307.1H33M31.500 310.9H33M32.200 314.8H33M31.500 318.6H33M32.200 322.5H33M31.500 326.3H33M32.200 330.2H33M22 334.0H33M32.200 337.9H33M31.500 341.7H33M32.200 345.6H33M31.500 349.4H33M32.200 353.2H33M31.500 357.1H33M32.200 361.0H33M31.500 364.8H33M32.200 368.7H33M22 372.5H33M32.200 376.4H33M31.500 380.2H33M32.200 384.1H33M31.500 387.9H33M32.200 391.8H33M31.500 395.6H33M32.200 399.5H33" stroke="#656565" stroke-width="0.8"/>
<text x="51.8" y="66" font-size="6.500" fill="#b2b2b2">5</text>
<text x="90.3" y="66" font-size="6.500" fill="#b2b2b2">0</text>
<text x="128.8" y="66" font-size="6.500" fill="#b2b2b2">5</text>
<text x="167.3" y="66" font-size="6.500" fill="#b2b2b2">10</text>
<text x="205.8" y="66" font-size="6.500" fill="#b2b2b2">15</text>
<text x="244.3" y="66" font-size="6.500" fill="#b2b2b2">20</text>
<text x="282.8" y="66" font-size="6.500" fill="#b2b2b2">25</text>
<text x="321.3" y="66" font-size="6.500" fill="#b2b2b2">30</text>
<text x="359.8" y="66" font-size="6.500" fill="#b2b2b2">35</text>
<text x="398.3" y="66" font-size="6.500" fill="#b2b2b2">40</text>
<text x="436.8" y="66" font-size="6.500" fill="#b2b2b2">45</text>
<text x="475.3" y="66" font-size="6.500" fill="#b2b2b2">50</text>
<text x="513.8" y="66" font-size="6.500" fill="#b2b2b2">55</text>
<text x="552.3" y="66" font-size="6.500" fill="#b2b2b2">60</text>
<text x="590.8" y="66" font-size="6.500" fill="#b2b2b2">65</text>
<text x="24.500" y="111.0" font-size="6.500" fill="#a4a4a4">0</text>
<text x="24.500" y="149.5" font-size="6.500" fill="#a4a4a4">5</text>
<text x="24.500" y="188.0" font-size="6.500" fill="#a4a4a4">1</text>
<text x="24.500" y="195.0" font-size="6.500" fill="#a4a4a4">0</text>
<text x="24.500" y="226.5" font-size="6.500" fill="#a4a4a4">1</text>
<text x="24.500" y="233.5" font-size="6.500" fill="#a4a4a4">5</text>
<text x="24.500" y="265.0" font-size="6.500" fill="#a4a4a4">2</text>
<text x="24.500" y="272.0" font-size="6.500" fill="#a4a4a4">0</text>
<text x="24.500" y="303.5" font-size="6.500" fill="#a4a4a4">2</text>
<text x="24.500" y="310.5" font-size="6.500" fill="#a4a4a4">5</text>
<text x="24.500" y="342.0" font-size="6.500" fill="#a4a4a4">3</text>
<text x="24.500" y="349.0" font-size="6.500" fill="#a4a4a4">0</text>
<text x="24.500" y="380.5" font-size="6.500" fill="#a4a4a4">3</text>
<text x="24.500" y="387.5" font-size="6.500" fill="#a4a4a4">5</text>
</svg>
<div class="abs" style="left:0;top:38px;width:22px;height:12px;background:#454545"></div>
<div class="abs" style="left:0;top:50px;width:22px;height:350px;background:#535353"></div>
<div class="abs" style="left:20.5px;top:38px;width:1.5px;height:362px;background:#3c3c3c"></div>
<div class="abs" style="left:2px;top:42px;width:2px;height:2px;background:#b0b0b0"></div><div class="abs" style="left:5px;top:42px;width:2px;height:2px;background:#b0b0b0"></div>
<div class="abs" style="left:0;top:144px;width:18.5px;height:15px;background:#303030"></div>
<svg class="abs" style="left:2.4px;top:59.8px" width="11.5" height="11.5" viewBox="0 0 16 16"><path d="M8 1.5v13M1.5 8h13" stroke="#e2e2e2" stroke-width="1.3"/><path d="M8 0l2.4 3H5.6zM8 16l2.4-3H5.6zM0 8l3-2.4v4.8zM16 8l-3-2.4v4.8z" fill="#e2e2e2"/></svg>
<svg class="abs" style="left:2.4px;top:76.8px" width="11.5" height="11.5" viewBox="0 0 16 16"><rect x="2" y="3" width="12" height="10" fill="none" stroke="#e2e2e2" stroke-width="1.3" stroke-dasharray="2.2 1.6"/></svg>
<svg class="abs" style="left:15px;top:87.0px" width="2.5" height="2.5" viewBox="0 0 3 3"><path d="M3 0v3H0z" fill="#c0c0c0"/></svg>
<svg class="abs" style="left:2.4px;top:94.2px" width="11.5" height="11.5" viewBox="0 0 16 16"><ellipse cx="8.5" cy="6.5" rx="6" ry="4.3" fill="none" stroke="#e2e2e2" stroke-width="1.3" transform="rotate(-15 8.5 6.5)"/><path d="M4.5 10c-1.5 1-1.5 3 0 3.2 1.6.2 1.2-1.8-.2-1.6M4 13.2c-.2 1.2-1 2-2 2.3" fill="none" stroke="#e2e2e2" stroke-width="1.1"/></svg>
<svg class="abs" style="left:15px;top:104.5px" width="2.5" height="2.5" viewBox="0 0 3 3"><path d="M3 0v3H0z" fill="#c0c0c0"/></svg>
<svg class="abs" style="left:2.4px;top:111.8px" width="11.5" height="11.5" viewBox="0 0 16 16"><path d="M9 4.200C7.500 3 4.500 3 2.800 5c-1.800 2.200-1 5.500 1.200 6.500 1 .5 2 .4 2.800 0" fill="none" stroke="#e2e2e2" stroke-width="1.300" stroke-dasharray="2 1.200"/><path d="M8.200 9.600l5.600-7 1.800 1.500-5.600 7z" fill="#e2e2e2"/><path d="M7.600 10.300l2 1.700c-.8 1.800-2.600 2.700-4.800 2.400 1-.6 1.300-1.300 1.500-2.200.2-.8.600-1.500 1.300-1.900z" fill="#e2e2e2"/></svg>
<svg class="abs" style="left:15px;top:122.0px" width="2.5" height="2.5" viewBox="0 0 3 3"><path d="M3 0v3H0z" fill="#c0c0c0"/></svg>
<svg class="abs" style="left:2.4px;top:128.2px" width="11.5" height="11.5" viewBox="0 0 16 16"><path d="M4 0.5v11.5h11.5M0.5 4h11.5v11.5" fill="none" stroke="#e2e2e2" stroke-width="1.7"/></svg>
<svg class="abs" style="left:15px;top:138.5px" width="2.5" height="2.5" viewBox="0 0 3 3"><path d="M3 0v3H0z" fill="#c0c0c0"/></svg>
<svg class="abs" style="left:2.4px;top:145.2px" width="11.5" height="11.5" viewBox="0 0 16 16"><path d="M2 14.2l1-3L9 5.2l2 2-6 6z" fill="none" stroke="#e2e2e2" stroke-width="1.2"/><path d="M8.2 4.3l3.6 3.6M10 5.8l2.3-2.5a1.5 1.5 0 0 1 2.2 2.2L12.1 7.8z" fill="#e2e2e2" stroke="#e2e2e2" stroke-width="1.3"/></svg>
<svg class="abs" style="left:15px;top:155.5px" width="2.5" height="2.5" viewBox="0 0 3 3"><path d="M3 0v3H0z" fill="#c0c0c0"/></svg>
<svg class="abs" style="left:2.4px;top:162.8px" width="11.5" height="11.5" viewBox="0 0 16 16"><rect x="3" y="3.5" width="10" height="9" rx="1.5" fill="none" stroke="#e2e2e2" stroke-width="1.3"/><path d="M5.5 1.5v2M8 1.5v2M10.500 1.5v2M5.5 12.5v2M8 12.5v2M10.5 12.5v2M1 6h2M1 8h2M1 10h2M13 6h2M13 8h2M13 10h2" stroke="#e2e2e2" stroke-width="1.1"/></svg>
<svg class="abs" style="left:15px;top:173.0px" width="2.5" height="2.5" viewBox="0 0 3 3"><path d="M3 0v3H0z" fill="#c0c0c0"/></svg>
<svg class="abs" style="left:2.4px;top:180.2px" width="11.5" height="11.5" viewBox="0 0 16 16"><path d="M14.800 0.800c.8.700.6 1.600 0 2.300L8.600 10.400 6 8l6.700-7c.6-.6 1.400-.8 2.100-.2z" fill="#e2e2e2"/><path d="M5.200 8.900l2.300 2.100c-.5 2.600-2.900 4.100-6.500 3.800 1.500-.9 1.700-1.800 2-3.200.3-1.300 1-2.300 2.200-2.700z" fill="#e2e2e2"/></svg>
<svg class="abs" style="left:15px;top:190.5px" width="2.5" height="2.5" viewBox="0 0 3 3"><path d="M3 0v3H0z" fill="#c0c0c0"/></svg>
<svg class="abs" style="left:2.4px;top:196.8px" width="11.5" height="11.5" viewBox="0 0 16 16"><path d="M6 2.200a2 2 0 0 1 4 0c0 1.300-.8 2-.8 3.400 0 .9.600 1.400 1.600 1.400H13c.800 0 1.200.5 1.200 1.200V10.500H1.800V8.200C1.800 7.500 2.200 7 3 7h2.200c1 0 1.600-.5 1.600-1.400C6.800 4.200 6 3.500 6 2.200z" fill="#e2e2e2"/><rect x="1.800" y="12" width="12.400" height="2" fill="#e2e2e2"/></svg>
<svg class="abs" style="left:15px;top:207.0px" width="2.5" height="2.5" viewBox="0 0 3 3"><path d="M3 0v3H0z" fill="#c0c0c0"/></svg>
<svg class="abs" style="left:2.4px;top:214.2px" width="11.5" height="11.5" viewBox="0 0 16 16"><path d="M14.500 1.200c.6.500.4 1.200 0 1.700L9 9.200 7.400 7.800l5.500-6.400c.5-.5 1.100-.6 1.600-.2z" fill="#e2e2e2"/><path d="M6.600 8.600l1.600 1.500c-.4 2-2.200 3.200-4.900 3 1.100-.7 1.300-1.400 1.500-2.400.3-1 .9-1.800 1.800-2.100z" fill="#e2e2e2"/><path d="M1.500 6.500A4.500 4.500 0 0 1 8.500 2.500M1.500 6.500l-1.200-2M1.500 6.500l2-.8" fill="none" stroke="#e2e2e2" stroke-width="1.100"/></svg>
<svg class="abs" style="left:15px;top:224.5px" width="2.5" height="2.5" viewBox="0 0 3 3"><path d="M3 0v3H0z" fill="#c0c0c0"/></svg>
<svg class="abs" style="left:2.4px;top:231.8px" width="11.5" height="11.5" viewBox="0 0 16 16"><path d="M9.500 2.500l5 4.500-6 6.500H4.500L1.500 10.800z" fill="none" stroke="#e2e2e2" stroke-width="1.300"/><path d="M9.500 2.500l5 4.500-3.800 4.100-5-4.500z" fill="#e2e2e2"/><path d="M2 14.500h12" stroke="#e2e2e2" stroke-width="1.100"/></svg>
<svg class="abs" style="left:15px;top:242.0px" width="2.5" height="2.5" viewBox="0 0 3 3"><path d="M3 0v3H0z" fill="#c0c0c0"/></svg>
<svg class="abs" style="left:2.4px;top:247.8px" width="11.5" height="11.5" viewBox="0 0 16 16"><defs><linearGradient id="tg" x1="0" x2="1"><stop offset="0" stop-color="#eee"/><stop offset="1" stop-color="#444"/></linearGradient></defs><rect x="1.500" y="3" width="13" height="10" fill="url(#tg)" stroke="#e2e2e2" stroke-width="1.200"/></svg>
<svg class="abs" style="left:15px;top:258.0px" width="2.5" height="2.5" viewBox="0 0 3 3"><path d="M3 0v3H0z" fill="#c0c0c0"/></svg>
<svg class="abs" style="left:2.4px;top:265.2px" width="11.5" height="11.5" viewBox="0 0 16 16"><path d="M5 1.500c2.500-1 6-.3 7.500 2 1.200 2 .3 4.300-2 5-1.200.4-2.300.2-3 1.200L5.500 14.500 3 13l1.800-4C3 7.500 2.500 3 5 1.500z" fill="#e2e2e2"/></svg>
<svg class="abs" style="left:15px;top:275.5px" width="2.5" height="2.5" viewBox="0 0 3 3"><path d="M3 0v3H0z" fill="#c0c0c0"/></svg>
<svg class="abs" style="left:2.4px;top:282.8px" width="11.5" height="11.5" viewBox="0 0 16 16"><circle cx="9.500" cy="5.800" r="4.300" fill="#e2e2e2"/><path d="M6.500 9l-4.800 5.500" stroke="#e2e2e2" stroke-width="2.200" stroke-linecap="round"/></svg>
<svg class="abs" style="left:15px;top:293.0px" width="2.5" height="2.5" viewBox="0 0 3 3"><path d="M3 0v3H0z" fill="#c0c0c0"/></svg>
<svg class="abs" style="left:2.4px;top:300.2px" width="11.5" height="11.5" viewBox="0 0 16 16"><path d="M8.500 1.500l5.500 5.500-2.500 1.200c-.8 2.500-2.200 4.500-5.500 5.300L2 14.500l.8-4c.8-3.300 2.800-4.700 5.300-5.500z" fill="none" stroke="#e2e2e2" stroke-width="1.300"/><circle cx="7" cy="9.500" r="1.200" fill="#e2e2e2"/><path d="M2 14.500l4.200-4.200" stroke="#e2e2e2" stroke-width="1"/></svg>
<svg class="abs" style="left:15px;top:310.5px" width="2.5" height="2.5" viewBox="0 0 3 3"><path d="M3 0v3H0z" fill="#c0c0c0"/></svg>
<svg class="abs" style="left:2.4px;top:316.8px" width="11.5" height="11.5" viewBox="0 0 16 16"><path d="M1.500 1h13v3.800h-1.300V2.800H9.200v10.600h2V15H4.800v-1.600h2V2.800H2.800v2H1.500z" fill="#e2e2e2"/></svg>
<svg class="abs" style="left:15px;top:327.0px" width="2.5" height="2.5" viewBox="0 0 3 3"><path d="M3 0v3H0z" fill="#c0c0c0"/></svg>
<svg class="abs" style="left:2.4px;top:334.2px" width="11.5" height="11.5" viewBox="0 0 16 16"><path d="M4 1.200l8.800 8.300-4.200.2 2.400 4.700-1.900.9-2.300-4.800L4 13.500z" fill="#1e1e1e" stroke="#e2e2e2" stroke-width="1.200"/></svg>
<svg class="abs" style="left:15px;top:344.5px" width="2.5" height="2.5" viewBox="0 0 3 3"><path d="M3 0v3H0z" fill="#c0c0c0"/></svg>
<svg class="abs" style="left:2.4px;top:350.8px" width="11.5" height="11.5" viewBox="0 0 16 16"><rect x="1.500" y="3" width="13" height="10" fill="#6a6a6a" stroke="#e2e2e2" stroke-width="1.300"/></svg>
<svg class="abs" style="left:15px;top:361.0px" width="2.5" height="2.5" viewBox="0 0 3 3"><path d="M3 0v3H0z" fill="#c0c0c0"/></svg>
<svg class="abs" style="left:2.4px;top:368.2px" width="11.5" height="11.5" viewBox="0 0 16 16"><path d="M4 8.500V3.200a1.100 1.100 0 0 1 2.200 0V1.800a1.100 1.100 0 0 1 2.200 0V2.600a1.100 1.100 0 0 1 2.200 0V4.200a1.100 1.100 0 0 1 2.200 0v6c0 3.200-1.800 5.300-5 5.300-2.400 0-3.500-.9-4.700-2.900L1 9c-.5-1.100.8-1.900 1.600-1z" fill="#e2e2e2"/></svg>
<svg class="abs" style="left:15px;top:378.5px" width="2.5" height="2.5" viewBox="0 0 3 3"><path d="M3 0v3H0z" fill="#c0c0c0"/></svg>
<svg class="abs" style="left:2.4px;top:384.8px" width="11.5" height="11.5" viewBox="0 0 16 16"><circle cx="6.500" cy="6.500" r="4.600" fill="none" stroke="#e2e2e2" stroke-width="1.600"/><path d="M10 10l4.500 4.500" stroke="#e2e2e2" stroke-width="2.200" stroke-linecap="round"/></svg>

<div class="abs" style="left:653px;top:38px;width:236px;height:8px;background:#454545"></div>
<div class="abs" style="left:653px;top:46px;width:162px;height:354px;background:#4a4a4a"></div>
<div class="abs" style="left:653px;top:46px;width:162px;height:19px;background:#424242"></div>
<div class="abs" style="left:653px;top:46px;width:31px;height:20px;background:#4f4f4f"></div>
<div class="abs" style="left:652px;top:38px;width:1px;height:362px;background:#383838"></div>
<div class="abs" style="left:814px;top:38px;width:2px;height:362px;background:#3a3a3a"></div>
<div class="abs" style="left:816px;top:46px;width:24px;height:354px;background:#535353"></div>
<div class="abs" style="left:840px;top:38px;width:3px;height:362px;background:#3a3a3a"></div>
<div class="abs" style="left:843px;top:46px;width:46px;height:354px;background:#535353"></div>
<div class="abs" style="left:843px;top:92px;width:46px;height:1px;background:#444"></div>
<svg class="abs" style="left:800px;top:40px" width="89" height="6" viewBox="800 40 89 6"><g fill="#c8c8c8"><rect x="805.500" y="42" width="1.600" height="1.800"/><rect x="808.300" y="42" width="1.600" height="1.800"/><rect x="832.500" y="42" width="1.600" height="1.800"/><rect x="835.300" y="42" width="1.600" height="1.800"/><rect x="885.500" y="42" width="1.600" height="1.800"/><rect x="888.300" y="42" width="1.600" height="1.800"/></g></svg>
<svg class="abs" style="left:803px;top:53px" width="7" height="6" viewBox="0 0 9 8"><path d="M0.500 1h8M0.500 3h8M0.500 5h8M0.500 7h8" stroke="#9a9a9a" stroke-width="1"/></svg>
<svg class="abs" style="left:821.500px;top:55.500px" width="15" height="14.500" viewBox="0 0 18 19"><path d="M1.500 1.500h6.500l4.500 11H6z" fill="none" stroke="#d4d4d4" stroke-width="1.100"/><path d="M2 2l5.500 10M4.500 1.500v6" stroke="#d4d4d4" stroke-width="0.900" fill="none"/><path d="M10 7h6v10.500H9.500l-2-4.500" fill="none" stroke="#d4d4d4" stroke-width="1.100"/><path d="M11.500 15l2.500-5M14 10v5" stroke="#d4d4d4" stroke-width="0.900" fill="none"/></svg>
<svg class="abs" style="left:848.800px;top:56.800px" width="13" height="10.500" viewBox="0 0 16 14"><path d="M8 1.500C3.500 1.500 1 4.200 1 7.200c0 2.800 2.300 5.300 5.500 5.300 1.500 0 1.600-1 1.300-1.800-.3-.9.200-1.700 1.400-1.700H12c1.800 0 3-1.200 3-2.800C15 3.500 12 1.500 8 1.500z" fill="#e6e6e6"/><circle cx="4.500" cy="7.300" r="1.300" fill="#535353"/><circle cx="6" cy="4.400" r="1.300" fill="#535353"/><circle cx="9.300" cy="3.800" r="1.300" fill="#535353"/><circle cx="12.300" cy="5.500" r="1.300" fill="#535353"/></svg>
<div class="abs" style="left:822px;top:50px;width:13px;height:0;border-top:1px dashed #5e5e5e"></div><div class="abs" style="left:858px;top:50px;width:18px;height:0;border-top:1px dashed #5e5e5e"></div>

<div class="abs" style="left:566px;top:72px;width:298.500px;height:311px;background:#3c3c3c"></div>
<div class="abs" style="left:567px;top:73px;width:296.300px;height:309px;background:#535353"></div>
<div class="abs" style="left:567px;top:73px;width:296.300px;height:20px;background:#ffffff"></div>
<svg class="abs" style="left:848px;top:78px" width="10" height="10" viewBox="0 0 10 10"><path d="M1 1l8 8M9 1l-8 8" stroke="#222" stroke-width="1.100"/></svg>
<svg class="abs" style="left:575.5px;top:100.5px" width="13" height="13" viewBox="0 0 16 16"><path d="M2 14.200l1-3L9 5.200l2 2-6 6z" fill="none" stroke="#e2e2e2" stroke-width="1.300"/><path d="M8.200 4.300l3.600 3.600M10 5.800l2.300-2.500a1.500 1.500 0 0 1 2.200 2.200L12.100 7.800z" fill="#e2e2e2" stroke="#e2e2e2" stroke-width="1.300"/></svg>
<svg class="abs" style="left:598.0px;top:100.5px" width="13" height="13" viewBox="0 0 16 16"><path d="M2 14.200l1-3L9 5.200l2 2-6 6z" fill="none" stroke="#e2e2e2" stroke-width="1.300"/><path d="M8.200 4.300l3.600 3.600M10 5.800l2.300-2.500a1.500 1.500 0 0 1 2.200 2.200L12.100 7.800z" fill="#e2e2e2" stroke="#e2e2e2" stroke-width="1.300"/><path d="M11 13h4M13 11v4" stroke="#e2e2e2" stroke-width="1.200"/></svg>
<svg class="abs" style="left:620.5px;top:100.5px" width="13" height="13" viewBox="0 0 16 16"><path d="M2 14.200l1-3L9 5.200l2 2-6 6z" fill="none" stroke="#e2e2e2" stroke-width="1.300"/><path d="M8.200 4.300l3.600 3.600M10 5.800l2.300-2.500a1.500 1.500 0 0 1 2.200 2.200L12.100 7.800z" fill="#e2e2e2" stroke="#e2e2e2" stroke-width="1.300"/><path d="M11 13h4" stroke="#e2e2e2" stroke-width="1.200"/></svg>
<div class="abs" style="left:573.500px;top:121px;width:8.500px;height:8.500px;background:#4a4a4a;border:1px solid #727272;box-sizing:border-box"></div>
<div class="trk" style="left:636.500px;top:139.500px;width:111.500px"></div>
<svg class="abs" style="left:735.5px;top:142.5px" width="8" height="7" viewBox="0 0 8 7"><path d="M4 0.300L7.300 4.500V6.600H0.700V4.500z" fill="#f2f2f2"/></svg>
<div class="inp" style="left:760px;top:137px;width:27px;height:12.500px"></div>
<div class="abs" style="left:761px;top:102px;width:26.500px;height:26.500px;background:#0b67b2;border:1px solid #3d78a8;box-sizing:border-box"></div>
<div class="btn" style="left:797px;top:99.500px;width:60px;height:18px;border-color:#d2d2d2"></div>
<div class="btn" style="left:797px;top:122.800px;width:60px;height:18px"></div>
<div class="btn" style="left:797px;top:146px;width:60px;height:17.500px"></div>
<div class="btn" style="left:797px;top:169px;width:60px;height:17.500px"></div>
<div class="abs" style="left:802.500px;top:194px;width:8.500px;height:8.500px;background:#f0f0f0;border-radius:1px"></div>
<svg class="abs" style="left:802.500px;top:194px" width="8.500" height="8.500" viewBox="0 0 9 9"><path d="M1.800 4.600l2 2 3.500-4.200" stroke="#222" stroke-width="1.400" fill="none"/></svg>
<!-- preview -->
<div class="abs" style="left:614px;top:176px;width:132px;height:87.500px;background:#fafafa"></div>
<svg class="abs" style="left:614px;top:176px" width="132" height="87.500" viewBox="0 0 132 87.500">
<g transform="scale(0.2705) translate(-88,-103)" filter="url(#pvb)">
<defs><filter id="pvb"><feGaussianBlur stdDeviation="1.200"/></filter></defs>
<path d="M300 314 C296 322 292 326 286 330 C262 340 230 352 212 362 C196 372 188 386 184 402 L180 440 L490 440 L484 402 C480 386 474 370 458 362 C440 352 408 340 388 330 C384 326 381 320 380 314 Z" fill="#303030"/>
<path d="M343.700 123.500 C330 123 315 128 303 137.500 C292 145 283 152 277 160 C271 169 268 177 267 182.500 C264 191 262.500 199 261.600 205 C258 228 252 256 246 280 C243 296 248 310 260 316 C270 319.500 284 320 296 318.500 L310 330 L337 354 L366 330 L382 319.500 C392 322.500 406 322 415 318 C426 313 431 300 429 284 C424 258 416 228 411 205 C410 199 408 191 405.600 182.500 C405 176 403 168 400 160 C396 152 390 144 382 137.500 C370 128 356 123 343.700 123.500 Z" fill="#060606"/>
<path d="M286 215 C284 250 292 285 318 305 C330 312 346 312 358 305 C384 285 394 250 393 215 Z" fill="#0d0d0d"/>
<path d="M300 316 L316 378 L337 355 L366 380 L381 316" fill="none" stroke="#3c3c3c" stroke-width="3"/>
</g></svg>
<!-- radios -->
<div class="abs" style="left:626.500px;top:299.500px;width:8.500px;height:8.500px;border-radius:50%;background:#f2f2f2"></div>
<div class="abs" style="left:629.300px;top:302.300px;width:3px;height:3px;border-radius:50%;background:#2a2a2a"></div>
<div class="abs" style="left:682px;top:299.500px;width:8.500px;height:8.500px;border-radius:50%;background:#3e3e3e;border:1px solid #5a5a5a;box-sizing:border-box"></div>
<div class="abs" style="left:573.500px;top:322px;width:216px;height:1px;background:#474747"></div>
<div class="trk" style="left:629px;top:330.500px;width:87px"></div>
<div class="trk" style="left:629px;top:348.500px;width:87px"></div>
<div class="trk" style="left:629px;top:366.500px;width:87px"></div>
<svg class="abs" style="left:704.5px;top:333.8px" width="8" height="7" viewBox="0 0 8 7"><path d="M4 0.300L7.300 4.500V6.600H0.700V4.500z" fill="#f2f2f2"/></svg><svg class="abs" style="left:668.5px;top:351.5px" width="8" height="7" viewBox="0 0 8 7"><path d="M4 0.300L7.300 4.500V6.600H0.700V4.500z" fill="#f2f2f2"/></svg><svg class="abs" style="left:668.5px;top:369.2px" width="8" height="7" viewBox="0 0 8 7"><path d="M4 0.300L7.300 4.500V6.600H0.700V4.500z" fill="#f2f2f2"/></svg>
<div class="inp" style="left:728px;top:329px;width:27.500px;height:11.500px"></div>
<div class="abs" style="left:729px;top:330px;width:19.500px;height:9.500px;background:#0a62c6"></div>
<div class="inp" style="left:728px;top:347px;width:27.500px;height:11.500px"></div>
<div class="inp" style="left:728px;top:364.500px;width:27.500px;height:11.500px"></div>
<div class="abs" style="left:761px;top:331px;width:27px;height:27.500px;background:#b20a1e"></div>
<svg class="abs" style="left:764px;top:344px" width="12" height="13" viewBox="0 0 12 13"><path d="M3.500 7V1.800a1 1 0 0 1 2 0V5l.3-.8a.9.900 0 0 1 1.700.2l.2-.3a.9.900 0 0 1 1.600.5l.2-.2a.8.800 0 0 1 1.400.6V9c0 2.200-1.300 3.500-3.600 3.500-1.800 0-2.800-.7-3.600-2.100L1 8c-.4-.9.600-1.500 1.300-.8z" fill="#fff" stroke="#222" stroke-width="0.600"/></svg>

<span class="t" style="left:25.8px;top:2.5px;font-size:9px;color:#ececec;transform:scaleX(0.907);">文件(F)</span>
<span class="t" style="left:63.8px;top:2.5px;font-size:9px;color:#ececec;transform:scaleX(0.833);">编辑(E)</span>
<span class="t" style="left:100.0px;top:2.5px;font-size:9px;color:#ececec;transform:scaleX(0.896);">图像(I)</span>
<span class="t" style="left:135.0px;top:2.5px;font-size:9px;color:#ececec;transform:scaleX(0.862);">图层(L)</span>
<span class="t" style="left:172.5px;top:2.5px;font-size:9px;color:#ececec;transform:scaleX(0.833);">文字(Y)</span>
<span class="t" style="left:209.2px;top:2.5px;font-size:9px;color:#ececec;transform:scaleX(0.858);">选择(S)</span>
<span class="t" style="left:246.2px;top:2.5px;font-size:9px;color:#ececec;transform:scaleX(0.890);">滤镜(T)</span>
<span class="t" style="left:283.2px;top:2.5px;font-size:9px;color:#ececec;transform:scaleX(0.802);">3D(D)</span>
<span class="t" style="left:314.2px;top:2.5px;font-size:9px;color:#ececec;transform:scaleX(0.900);">视图(V)</span>
<span class="t" style="left:352.5px;top:2.5px;font-size:9px;color:#ececec;transform:scaleX(0.900);">窗口(W)</span>
<span class="t" style="left:392.5px;top:2.5px;font-size:9px;color:#ececec;transform:scaleX(0.902);">帮助(H)</span>
<span class="t" style="left:1.5px;top:0.0px;font-size:12.5px;color:#84a4d0;font-weight:bold;transform:scaleX(0.850);">Ps</span>
<span class="t" style="left:43.9px;top:23.2px;font-size:8.5px;color:#e4e4e4;transform:scaleX(0.957);">取样大小:</span>
<span class="t" style="left:87.7px;top:23.2px;font-size:8.5px;color:#ececec;transform:scaleX(0.929);">取样点</span>
<span class="t" style="left:163.0px;top:23.2px;font-size:8.5px;color:#7c7c7c;transform:scaleX(0.929);">样本:</span>
<span class="t" style="left:190.5px;top:23.2px;font-size:8.5px;color:#7c7c7c;transform:scaleX(0.911);">所有图层</span>
<span class="t" style="left:320.0px;top:23.2px;font-size:8.5px;color:#7c7c7c;transform:scaleX(0.894);">显示取样环</span>
<span class="t" style="left:29.7px;top:43.9px;font-size:9.5px;color:#e4e4e4;transform:scaleX(0.828);">timg (1).jpg @ 41.3% (图层 1, RGB/8#) *</span>
<span class="t" style="left:659.7px;top:51.8px;font-size:8.5px;color:#f0f0f0;font-weight:bold;transform:scaleX(0.958);">图层</span>
<span class="t" style="left:687.9px;top:51.8px;font-size:8.5px;color:#a6a6a6;transform:scaleX(0.946);">通道</span>
<span class="t" style="left:711.7px;top:51.8px;font-size:8.5px;color:#a6a6a6;transform:scaleX(0.917);">路径</span>
<span class="t" style="left:735.0px;top:51.8px;font-size:8.5px;color:#a6a6a6;transform:scaleX(0.913);">历史记</span>
<span class="t" style="left:764.4px;top:51.8px;font-size:8.5px;color:#a6a6a6;transform:scaleX(0.887);">属性</span>
<span class="t" style="left:867.0px;top:58.1px;font-size:9px;color:#ececec;font-weight:500;transform:scaleX(0.849);">颜色</span>
<span class="t" style="left:867.0px;top:77.5px;font-size:9px;color:#ececec;font-weight:500;transform:scaleX(0.849);">色板</span>
<span class="t" style="left:572.4px;top:79.3px;font-size:8px;color:#111;transform:scaleX(0.956);">替换颜色</span>
<span class="t" style="left:587.4px;top:120.5px;font-size:9px;color:#e6e6e6;transform:scaleX(0.971);">本地化颜色簇(Z)</span>
<span class="t" style="left:575.3px;top:138.8px;font-size:9px;color:#e6e6e6;transform:scaleX(0.954);">颜色容差(F):</span>
<span class="t" style="left:736.5px;top:110.2px;font-size:9px;color:#e6e6e6;transform:scaleX(0.902);">颜色:</span>
<span class="t" style="left:763.0px;top:139.1px;font-size:8.5px;color:#e6e6e6;transform:scaleX(0.916);">184</span>
<span class="t" style="left:819.0px;top:104.0px;font-size:9px;color:#ececec;transform:scaleX(0.921);">确定</span>
<span class="t" style="left:819.0px;top:127.1px;font-size:9px;color:#ececec;transform:scaleX(0.921);">取消</span>
<span class="t" style="left:809.4px;top:150.0px;font-size:9px;color:#ececec;transform:scaleX(0.964);">载入(L)...</span>
<span class="t" style="left:809.4px;top:173.1px;font-size:9px;color:#ececec;transform:scaleX(0.939);">存储(S)...</span>
<span class="t" style="left:816.6px;top:193.5px;font-size:9px;color:#ececec;transform:scaleX(0.933);">预览(P)</span>
<span class="t" style="left:640.2px;top:299.5px;font-size:9px;color:#ececec;transform:scaleX(0.911);">选区(C)</span>
<span class="t" style="left:696.3px;top:299.5px;font-size:9px;color:#ececec;transform:scaleX(0.943);">图像(M)</span>
<span class="t" style="left:575.0px;top:330.3px;font-size:9px;color:#e6e6e6;transform:scaleX(0.952);">色相(H):</span>
<span class="t" style="left:575.0px;top:347.9px;font-size:9px;color:#e6e6e6;transform:scaleX(0.971);">饱和度(A):</span>
<span class="t" style="left:575.0px;top:365.5px;font-size:9px;color:#e6e6e6;transform:scaleX(0.925);">明度(G):</span>
<span class="t" style="left:729.5px;top:330.6px;font-size:8.5px;color:#ffffff;transform:scaleX(0.940);">+148</span>
<span class="t" style="left:730.5px;top:348.1px;font-size:8.5px;color:#e6e6e6;transform:scaleX(0.950);">0</span>
<span class="t" style="left:730.5px;top:365.8px;font-size:8.5px;color:#e6e6e6;transform:scaleX(0.950);">0</span>
<span class="t" style="left:766.5px;top:363.2px;font-size:9px;color:#e6e6e6;transform:scaleX(0.899);">结果</span>

</div>
</body>
</html>
